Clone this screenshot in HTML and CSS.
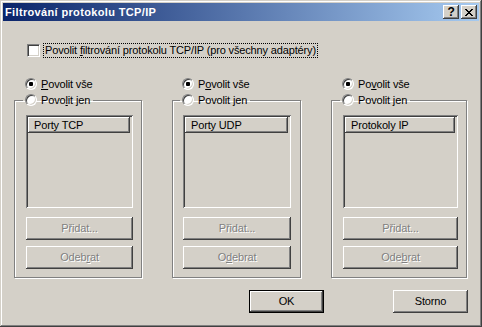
FILE: index.html
```html
<!DOCTYPE html>
<html lang="cs">
<head>
  <meta charset="UTF-8">
  <title>Filtrování protokolu TCP/IP</title>
  <link rel="stylesheet" href="styles.css">
</head>
<body>
  <div class="window">
    <div class="titlebar">
      <span class="title">Filtrování protokolu TCP/IP</span>
      <div class="title-buttons">
        <span class="tbtn help">?</span>
        <span class="tbtn">
          <svg width="8" height="7" viewBox="0 0 8 7"><path d="M0 0h2v1h1v1h2V1h1V0h2v1H7v1H6v1H5v1h1v1h1v1h1v1H6V6H5V5H3v1H2v1H0V6h1V5h1V4h1V3H2V2H1V1H0z" fill="#000"/></svg>
        </span>
      </div>
    </div>

    <div class="content">
      <div class="check-row">
        <span class="checkbox"></span>
        <span class="focus">Povolit <u>f</u>iltrování protokolu TCP/IP (pro všechny adaptéry)</span>
      </div>

      <div class="columns">
        <div class="col col-tcp">
          <div class="radio-row"><span class="radio on"></span><span class="rlabel"><u>P</u>ovolit vše</span></div>
          <fieldset class="group">
            <legend class="radio-row"><span class="radio"></span><span class="rlabel">Povo<u>l</u>it jen</span></legend>
            <div class="list"><div class="list-head">Porty TCP</div></div>
            <div class="btn disabled add">Přidat...</div>
            <div class="btn disabled">Odeb<u>r</u>at</div>
          </fieldset>
        </div>

        <div class="col col-udp">
          <div class="radio-row"><span class="radio on"></span><span class="rlabel">P<u>o</u>volit vše</span></div>
          <fieldset class="group">
            <legend class="radio-row"><span class="radio"></span><span class="rlabel">Povolit <u>j</u>en</span></legend>
            <div class="list"><div class="list-head">Porty UDP</div></div>
            <div class="btn disabled add">Přidat...</div>
            <div class="btn disabled">O<u>d</u>ebrat</div>
          </fieldset>
        </div>

        <div class="col col-ip">
          <div class="radio-row"><span class="radio on"></span><span class="rlabel">Po<u>v</u>olit vše</span></div>
          <fieldset class="group">
            <legend class="radio-row"><span class="radio"></span><span class="rlabel">Povolit jen</span></legend>
            <div class="list"><div class="list-head">Protokoly IP</div></div>
            <div class="btn disabled add">Přidat...</div>
            <div class="btn disabled">Ode<u>b</u>rat</div>
          </fieldset>
        </div>
      </div>

      <div class="footer">
        <div class="btn default">OK</div>
        <div class="btn">Storno</div>
      </div>
    </div>
  </div>
</body>
</html>
```

FILE: styles.css
```css
body {
  margin: 0;
  background: #d4d0c8;
  font-family: "Liberation Sans", Arial, sans-serif;
  font-size: 11px;
  letter-spacing: -0.15px;
  color: #000;
}
u {
  text-decoration: underline;
  text-underline-offset: 1px;
}
.window {
  width: 482px;
  height: 327px;
  box-sizing: border-box;
  padding: 3px;
  box-shadow: inset -1px -1px #404040, inset 1px 1px #d4d0c8, inset -2px -2px #808080, inset 2px 2px #fff;
}
.titlebar {
  height: 18px;
  display: flex;
  align-items: center;
  justify-content: space-between;
  padding: 0 2px;
  background: linear-gradient(to right, #0a246a, #a6caf0);
}
.title {
  color: #fff;
  font-weight: bold;
  letter-spacing: 0.35px;
}
.title-buttons {
  display: flex;
  gap: 2px;
}
.tbtn {
  width: 16px;
  height: 14px;
  box-sizing: border-box;
  display: flex;
  align-items: center;
  justify-content: center;
  background: #d4d0c8;
  box-shadow: inset -1px -1px #404040, inset 1px 1px #fff, inset -2px -2px #808080;
}
.tbtn.help {
  font-weight: bold;
  font-size: 12px;
  line-height: 12px;
}
.content {
  padding: 22px 11px 0 11px;
}
.check-row {
  display: flex;
  align-items: center;
  height: 15px;
  margin-left: 13px;
}
.checkbox {
  width: 13px;
  height: 13px;
  box-sizing: border-box;
  background: #fff;
  border: 1px solid;
  border-color: #808080 #fff #fff #808080;
  box-shadow: inset 1px 1px #404040, inset -1px -1px #d4d0c8;
  flex: none;
}
.focus {
  margin-left: 3px;
  height: 15px;
  box-sizing: border-box;
  line-height: 13px;
  padding: 0 1px;
  border: 1px dotted #000;
}
.columns {
  display: flex;
  gap: 30px;
  margin-top: 20px;
}
.col-tcp { width: 128px; }
.col-udp { width: 129px; }
.col-ip { width: 136px; }
.radio-row {
  display: flex;
  align-items: center;
  height: 12px;
  line-height: 12px;
  margin-left: 11px;
}
.col-udp > .radio-row {
  margin-left: 10px;
}
.rlabel {
  margin-left: 4px;
  white-space: nowrap;
}
.radio {
  position: relative;
  width: 12px;
  height: 12px;
  box-sizing: border-box;
  border-radius: 50%;
  background: #fff;
  border: 1px solid;
  border-color: #808080 #fff #fff #808080;
  box-shadow: inset 1px 1px #404040, inset -1px -1px #d4d0c8;
  flex: none;
}
.radio.on::after {
  content: "";
  position: absolute;
  left: 3px;
  top: 3px;
  width: 4px;
  height: 4px;
  border-radius: 1px;
  background: #000;
}
.group {
  margin: 4px 0 0 0;
  padding: 9px 8px 8px 11px;
  min-width: 0;
  border: 1px solid #808080;
  box-shadow: inset 1px 1px #fff, 1px 1px #fff;
}
.col-udp .group {
  padding-left: 10px;
  padding-right: 9px;
}
.group legend.radio-row {
  margin-left: -3px;
  padding: 0 3px 0 2px;
}
.list {
  height: 93px;
  box-sizing: border-box;
  padding: 2px 3px 2px 2px;
  box-shadow: inset 1px 1px #808080, inset -1px -1px #fff, inset 2px 2px #404040, inset -2px -2px #d4d0c8;
}
.list-head {
  height: 16px;
  line-height: 16px;
  padding-left: 6px;
  box-shadow: inset -1px -1px #404040, inset 1px 1px #fff, inset -2px -2px #808080;
}
.btn {
  height: 23px;
  line-height: 23px;
  text-align: center;
  box-sizing: border-box;
  box-shadow: inset -1px -1px #404040, inset 1px 1px #fff, inset -2px -2px #808080, inset 2px 2px #d4d0c8;
}
.btn.disabled {
  color: #808080;
  text-shadow: 1px 1px #fff;
  margin-top: 6px;
}
.btn.add {
  margin-top: 9px;
}
.footer {
  display: flex;
  justify-content: flex-end;
  gap: 69px;
  margin-top: 12px;
}
.footer .btn {
  width: 75px;
}
.btn.default {
  border: 1px solid #000;
  line-height: 21px;
}
```
